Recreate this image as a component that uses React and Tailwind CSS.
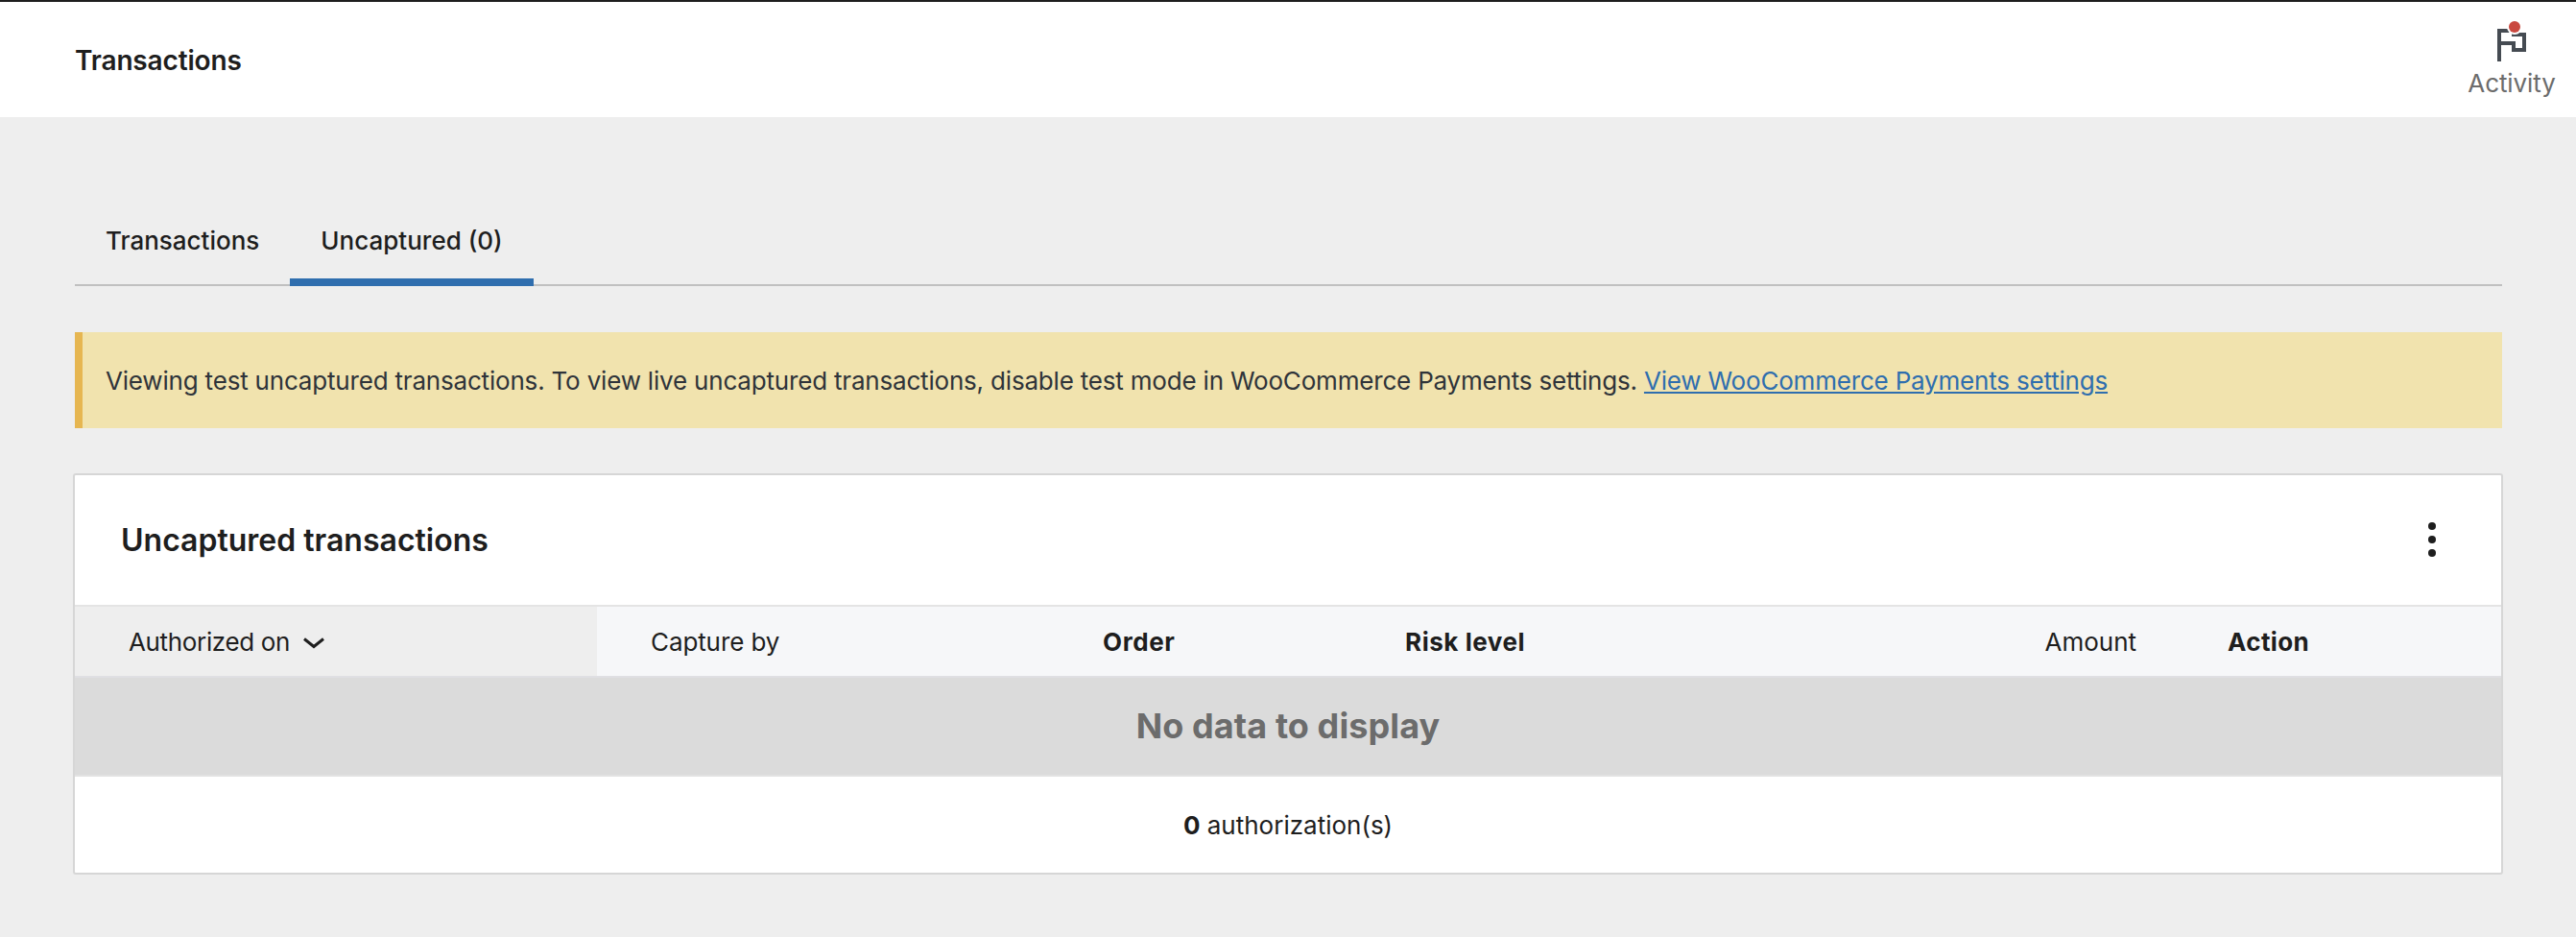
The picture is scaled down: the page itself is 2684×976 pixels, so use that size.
const font = { fontFamily: 'Inter, "Liberation Sans", sans-serif' };

function FlagIcon() {
  return (
    <svg width="48" height="48" viewBox="0 0 48 48" className="block">
      <path fillRule="evenodd" d="M9 8H28V12H39V32H24V25H13V42H9Z M13 12V21H28V28H35V16H24V12Z" fill="#454b52" />
      <circle cx="27" cy="6" r="8" fill="#fff" />
      <circle cx="27" cy="6" r="6" fill="#c9483f" />
    </svg>
  );
}

function Chevron() {
  return (
    <svg width="22" height="14" viewBox="0 0 22 14" className="block mt-[3px]">
      <path d="M1 2.5 L11 10.5 L21 2.5" fill="none" stroke="#1e1e1e" strokeWidth="3" />
    </svg>
  );
}

export default function App() {
  return (
    <div className="w-[2684px] h-[976px] bg-[#eeeeee] overflow-hidden text-[#1e1e1e] text-[26px]" style={font}>
      <header className="h-[122px] bg-white border-t-2 border-[#1e1e1e] flex items-center justify-between pl-[78px]">
        <h1 className="text-[28px] font-semibold tracking-[-0.15px] leading-none mt-[1px]">Transactions</h1>
        <div className="w-[100px] mr-[17px] self-start mt-[20px] flex flex-col items-center text-[#6c6c6c]">
          <FlagIcon />
          <span className="leading-[32px] mt-[1px] tracking-[-0.1px]">Activity</span>
        </div>
      </header>

      <main className="mx-[78px] w-[2529px]">
        <nav className="mt-[94px] h-[82px] border-b-2 border-[#c0c0c0] flex">
          <div className="h-[80px] w-[224px] pl-[32px] leading-[70px] font-medium">Transactions</div>
          <div className="h-[82px] w-[254px] text-center leading-[70px] font-medium border-b-[8px] border-[#2f6eae]">Uncaptured (0)</div>
        </nav>

        <div className="mt-[48px] h-[100px] bg-[#f1e3ae] border-l-[8px] border-[#e6b651] pl-[24px] flex items-center text-[#2f343a] tracking-[-0.19px]">
          <span>
            Viewing test uncaptured transactions. To view live uncaptured transactions, disable test mode in WooCommerce Payments settings.{" "}
            <a className="text-[#2f6eae] underline">View WooCommerce Payments settings</a>
          </span>
        </div>

        <section className="mt-[47px] bg-white border-2 border-[#d6d6d6] rounded-[3px] -ml-[2px] w-[2532px]">
          <div className="h-[135px] flex items-center justify-between pl-[48px] pr-[68px]">
            <h2 className="text-[32px] font-semibold leading-none">Uncaptured transactions</h2>
            <div className="flex flex-col gap-[6px] -mt-[1px]">
              <span className="w-[8px] h-[8px] rounded-full bg-[#1e1e1e]" />
              <span className="w-[8px] h-[8px] rounded-full bg-[#1e1e1e]" />
              <span className="w-[8px] h-[8px] rounded-full bg-[#1e1e1e]" />
            </div>
          </div>
          <div className="h-[76px] border-t-2 border-b-2 border-t-[#e4e4e4] border-b-[#dfdfe3] flex items-center bg-[#f6f7f9]">
            <div className="w-[544px] h-full bg-[#eeeeee] pl-[56px] flex items-center gap-[14px]">
              <span className="tracking-[-0.35px]">Authorized on</span>
              <Chevron />
            </div>
            <div className="w-[471px] pl-[56px] tracking-[-0.1px]">Capture by</div>
            <div className="w-[315px] pl-[56px] font-bold tracking-[0.6px]">Order</div>
            <div className="w-[858px] pl-[56px] flex justify-between pr-[40px]">
              <span className="font-bold tracking-[0.55px]">Risk level</span>
              <span>Amount</span>
            </div>
            <div className="pl-[55px] font-bold tracking-[0.4px]">Action</div>
          </div>
          <div className="h-[103px] bg-[#dbdbdb] border-b-2 border-[#e2e2e2] flex items-center justify-center">
            <span className="text-[36px] font-bold tracking-[0.1px] text-[#6c6c6c] -mt-[2px]">No data to display</span>
          </div>
          <div className="h-[100px] flex items-center justify-center">
            <span><strong className="font-bold">0</strong> authorization(s)</span>
          </div>
        </section>
      </main>
    </div>
  );
}
